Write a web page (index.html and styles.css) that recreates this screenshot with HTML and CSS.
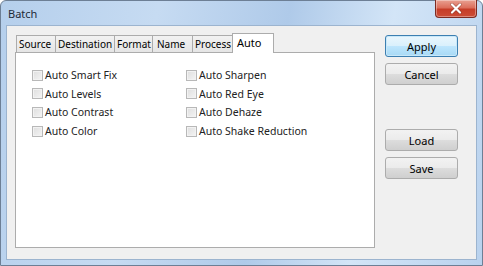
FILE: index.html
```html
<!DOCTYPE html>
<html lang="en">
<head>
    <meta charset="UTF-8">
    <title>Batch</title>
    <link rel="stylesheet" href="styles.css">
</head>
<body>
    <div class="window">
        <div class="titlebar">
            <span class="title">Batch</span>
            <button class="close-btn" aria-label="Close">
                <svg width="12" height="11" viewBox="0 0 12 11">
                    <path d="M2 1.5 L10 9.5 M10 1.5 L2 9.5" stroke="#5a2218" stroke-width="3.2" stroke-linecap="round" opacity="0.45"/>
                    <path d="M2 1.5 L10 9.5 M10 1.5 L2 9.5" stroke="#fff" stroke-width="2.2" stroke-linecap="round"/>
                </svg>
            </button>
        </div>

        <div class="client">
            <div class="tabs">
                <div class="tab-strip">
                    <div class="tab tab-source">Source</div>
                    <div class="tab tab-destination">Destination</div>
                    <div class="tab tab-format">Format</div>
                    <div class="tab tab-name">Name</div>
                    <div class="tab tab-process">Process</div>
                    <div class="tab tab-auto active">Auto</div>
                </div>
                <div class="tab-panel">
                    <div class="options">
                        <label class="option"><span class="box"></span>Auto Smart Fix</label>
                        <label class="option"><span class="box"></span>Auto Sharpen</label>
                        <label class="option"><span class="box"></span>Auto Levels</label>
                        <label class="option"><span class="box"></span>Auto Red Eye</label>
                        <label class="option"><span class="box"></span>Auto Contrast</label>
                        <label class="option"><span class="box"></span>Auto Dehaze</label>
                        <label class="option"><span class="box"></span>Auto Color</label>
                        <label class="option"><span class="box"></span>Auto Shake Reduction</label>
                    </div>
                </div>
            </div>

            <div class="actions">
                <button class="btn default">Apply</button>
                <button class="btn">Cancel</button>
                <div class="spacer"></div>
                <button class="btn">Load</button>
                <button class="btn">Save</button>
            </div>
        </div>
    </div>
</body>
</html>
```

FILE: styles.css
```css
/* Global */
body {
    margin: 0;
    font-family: 'Noto Sans', 'Open Sans', sans-serif;
    font-size: 10.5px;
    color: #000;
    background: #fff;
}
/* Window frame */
.window {
    width: 483px;
    height: 266px;
    box-sizing: border-box;
    border: 1px solid #6d7f95;
    border-radius: 6px 6px 0 0;
    background: linear-gradient(100deg, #b5cfec 0%, #c6dbf2 30%, #afcae9 55%, #d3e5f7 75%, #b9d2ee 100%);
    padding: 0 5px 5px 5px;
    display: flex;
    flex-direction: column;
}
.titlebar {
    height: 24px;
    display: flex;
    align-items: flex-start;
    justify-content: space-between;
}
.title {
    margin: 5px 0 0 2px;
    font-size: 11px;
    color: #1e2a38;
}
.close-btn {
    width: 42px;
    height: 18px;
    margin: -1px 0 0 0;
    border: 1px solid #7d2b22;
    border-top: none;
    border-radius: 0 0 4px 4px;
    background: linear-gradient(to bottom, #e9a192 0%, #dc6f5c 45%, #c63d28 55%, #cc4d36 100%);
    box-shadow: inset 0 0 0 1px rgba(255, 255, 255, 0.35);
    display: flex;
    align-items: center;
    justify-content: center;
    padding: 0;
}
/* Client area */
.client {
    flex: 1;
    background: #f0f0f0;
    border: 1px solid #9cb4cf;
    display: flex;
    padding: 7px 18px 0 8px;
}
.tabs {
    width: 360px;
    display: flex;
    flex-direction: column;
}
.tab-strip {
    display: flex;
    height: 19px;
    padding-left: 1px;
}
.tab {
    margin-top: 2px;
    padding: 0 0 0 2px;
    height: 17px;
    line-height: 16px;
    font-size: 10px;
    border: 1px solid #acacac;
    border-bottom: none;
    margin-right: -1px;
    background: linear-gradient(to bottom, #f2f2f2, #e5e5e5);
    color: #000;
    box-sizing: border-box;
    white-space: nowrap;
    overflow: hidden;
}
.tab-source { width: 40px; }
.tab-destination { width: 60px; }
.tab-format { width: 39px; }
.tab-name { width: 41px; padding-left: 4px; }
.tab-process { width: 41px; padding-left: 2px; }
.tab.active {
    width: 42px;
    margin-top: 0;
    height: 20px;
    line-height: 17px;
    padding-left: 4px;
    background: #fff;
    font-size: 11px;
    position: relative;
    z-index: 1;
    margin-bottom: -1px;
}
.tab-panel {
    height: 196px;
    box-sizing: border-box;
    border: 1px solid #acacac;
    background: #fff;
    padding: 13px 0 0 16px;
}
/* Checkbox grid */
.options {
    display: grid;
    grid-template-columns: 154px 1fr;
    grid-auto-rows: 18.6px;
}
.option {
    display: flex;
    align-items: center;
    color: #222;
}
.box {
    width: 9px;
    height: 9px;
    border: 1px solid #b8b8b8;
    background: linear-gradient(135deg, #dedede, #f4f4f4);
    box-shadow: inset 0 0 0 1px #f2f2f2;
    margin-right: 2px;
}
/* Buttons */
.actions {
    margin-left: 10px;
    padding-top: 2px;
    width: 73px;
    display: flex;
    flex-direction: column;
    gap: 6px;
}
.btn {
    height: 22px;
    width: 73px;
    border: 1px solid #acacac;
    border-radius: 3px;
    background: linear-gradient(to bottom, #f2f2f2 0%, #ebebeb 50%, #dddddd 51%, #cfcfcf 100%);
    font-family: inherit;
    font-size: 11px;
    color: #000;
    padding: 0;
}
.btn.default {
    border-color: #3c7fb1;
    background: linear-gradient(to bottom, #eaf6fd 0%, #d9f0fc 50%, #bee6fd 51%, #a7d9f5 100%);
    box-shadow: inset 0 0 0 1px #c8e8f9;
}
.spacer {
    height: 32px;
}
```
